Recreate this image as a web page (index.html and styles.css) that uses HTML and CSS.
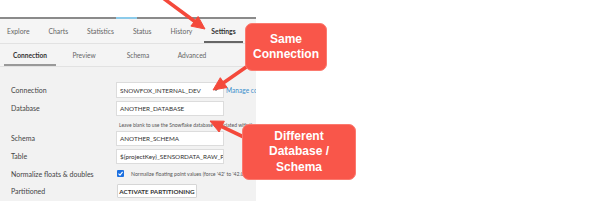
FILE: index.html
```html
<!DOCTYPE html>
<html>
<head>
<meta charset="utf-8">
<link rel="stylesheet" href="styles.css">
</head>
<body>
<div class="app">
  <div class="panel">
    <div class="topbar"></div>
    <div class="rule"><span class="rule-accent"></span></div>
    <nav class="tabs">
      <span class="tab">Explore</span>
      <span class="tab">Charts</span>
      <span class="tab">Statistics</span>
      <span class="tab">Status</span>
      <span class="tab">History</span>
      <span class="tab tab-active">Settings</span>
    </nav>
    <nav class="subtabs">
      <span class="subtab subtab-active">Connection</span>
      <span class="subtab">Preview</span>
      <span class="subtab">Schema</span>
      <span class="subtab">Advanced</span>
    </nav>
    <div class="form">
      <div class="row row-conn">
        <span class="label">Connection</span>
        <div class="control">
          <span class="select"><span class="value">SNOWFOX_INTERNAL_DEV</span><span class="caret"></span></span>
          <span class="link">Manage connection</span>
        </div>
      </div>
      <div class="row">
        <span class="label">Database</span>
        <div class="control"><span class="input">ANOTHER_DATABASE</span></div>
      </div>
      <div class="help-row">
        <span class="help">Leave blank to use the Snowflake database associated with the connection</span>
      </div>
      <div class="row">
        <span class="label">Schema</span>
        <div class="control"><span class="input">ANOTHER_SCHEMA</span></div>
      </div>
      <div class="row">
        <span class="label">Table</span>
        <div class="control"><span class="input">${projectKey}_SENSORDATA_RAW_P</span></div>
      </div>
      <div class="row row-check">
        <span class="label">Normalize floats &amp; doubles</span>
        <div class="control">
          <span class="checkbox"><svg viewBox="0 0 7 7" width="7" height="7"><path d="M1.5 3.6 L3 5.1 L5.6 1.9" fill="none" stroke="#fff" stroke-width="1.1"/></svg></span>
          <span class="check-text">Normalize floating point values (force '42' to '42.0')</span>
        </div>
      </div>
      <div class="row">
        <span class="label">Partitioned</span>
        <div class="control"><span class="button">ACTIVATE PARTITIONING</span></div>
      </div>
    </div>
  </div>

  <svg class="arrows" width="600" height="201" viewBox="0 0 600 201">
    <g stroke="#f4493b" stroke-width="3.6" stroke-linecap="round" fill="none">
      <line x1="163" y1="-2" x2="195.5" y2="22"/>
      <line x1="252" y1="63" x2="222.5" y2="83.4"/>
      <line x1="250" y1="140" x2="220.8" y2="126.2"/>
    </g>
    <g fill="#f4493b" stroke="#f4493b" stroke-width="1" stroke-linejoin="round">
      <polygon points="205,29 190.9,26.1 198.1,16.5"/>
      <polygon points="213,90 220.3,77.7 227.1,87.5"/>
      <polygon points="210,121 224.3,121.2 219.1,132"/>
    </g>
  </svg>

  <div class="callout callout-same">Same<br>Connection</div>
  <div class="callout callout-diff">Different<br>Database /<br>Schema</div>
</div>
</body>
</html>
```
FILE: styles.css
```css
html, body {
  margin: 0;
  padding: 0;
  background: #ffffff;
}
.app {
  position: relative;
  width: 600px;
  height: 201px;
  overflow: hidden;
  font-family: Lato, "Open Sans", sans-serif;
}
.panel {
  width: 256px;
  height: 201px;
  overflow: hidden;
  background: #f2f2f2;
  display: flex;
  flex-direction: column;
}
.topbar {
  height: 17px;
  background: #ffffff;
  flex: none;
}
.rule {
  height: 2px;
  background: #8a8a8a;
  flex: none;
  display: flex;
}
.rule-accent {
  margin-left: 116px;
  width: 21px;
  background: #8ccbea;
}
.tabs {
  flex: none;
  height: 24px;
  display: flex;
  gap: 5px;
  background: #f5f5f5;
  border-bottom: 1px solid #e2e2e2;
}
.tab {
  padding: 0 7px;
  font-size: 6.8px;
  color: #666;
  display: flex;
  align-items: center;
  padding-top: 2px;
  border-bottom: 2px solid transparent;
}
.tab-active {
  color: #333;
  font-weight: 700;
  border-bottom-color: #666;
}
.subtabs {
  flex: none;
  height: 22px;
  display: flex;
  padding-left: 3px;
  background: #f4f4f4;
  border-bottom: 1px solid #e2e2e2;
}
.subtab {
  width: 52px;
  margin: 0 1px;
  font-size: 6.6px;
  color: #666;
  display: flex;
  align-items: center;
  justify-content: center;
  padding-top: 1px;
  border-bottom: 2px solid transparent;
}
.subtab-active {
  color: #333;
  font-weight: 700;
  border-bottom-color: #999;
}
.form {
  padding-top: 14px;
  padding-left: 11px;
  display: flex;
  flex-direction: column;
}
.row {
  height: 18px;
  display: flex;
  align-items: center;
}
.row-check {
  height: 17px;
}
.label {
  width: 105px;
  flex: none;
  font-size: 7px;
  color: #444;
}
.control {
  display: flex;
  align-items: center;
  white-space: nowrap;
}
.select, .input {
  box-sizing: border-box;
  width: 108px;
  height: 15px;
  background: #fff;
  border: 1px solid #dcdcdc;
  font-size: 6.3px;
  color: #333;
  padding-left: 3px;
  display: flex;
  align-items: center;
  overflow: hidden;
  white-space: nowrap;
}
.select {
  height: 16px;
  position: relative;
}
.value {
  flex: 1;
}
.caret {
  width: 0;
  height: 0;
  border-left: 2.5px solid transparent;
  border-right: 2.5px solid transparent;
  border-top: 2.5px solid #444;
  margin-right: 5px;
}
.link {
  margin-left: 2px;
  font-size: 6.6px;
  color: #3a8fcc;
}
.help-row {
  height: 12px;
  padding-left: 108px;
  display: flex;
  align-items: flex-end;
  white-space: nowrap;
}
.help {
  font-size: 5px;
  color: #555;
  line-height: 8px;
}
.checkbox {
  margin-left: 1px;
  width: 7px;
  height: 7px;
  border-radius: 1px;
  background: #1a6fe0;
  display: flex;
}
.check-text {
  margin-left: 7px;
  font-size: 5.2px;
  color: #555;
}
.button {
  margin-left: 1px;
  box-sizing: border-box;
  width: 80px;
  height: 14px;
  background: #fff;
  border: 1px solid #d6d6d6;
  border-radius: 1px;
  font-size: 6.3px;
  font-weight: 700;
  color: #333;
  display: flex;
  align-items: center;
  justify-content: center;
}
.arrows {
  position: absolute;
  left: 0;
  top: 0;
}
.callout {
  position: absolute;
  box-sizing: border-box;
  background: #f9564a;
  border: 1px solid #fb7a6f;
  border-radius: 7px;
  color: #fff;
  font-family: "Liberation Sans", Arial, sans-serif;
  font-weight: 700;
  font-size: 12px;
  line-height: 15px;
  text-align: center;
  display: flex;
  align-items: center;
  justify-content: center;
}
.callout-same {
  left: 245px;
  top: 23px;
  width: 82px;
  height: 48px;
  padding-bottom: 1px;
}
.callout-diff {
  left: 242px;
  top: 124px;
  width: 114px;
  height: 56px;
  line-height: 15.5px;
}
```
